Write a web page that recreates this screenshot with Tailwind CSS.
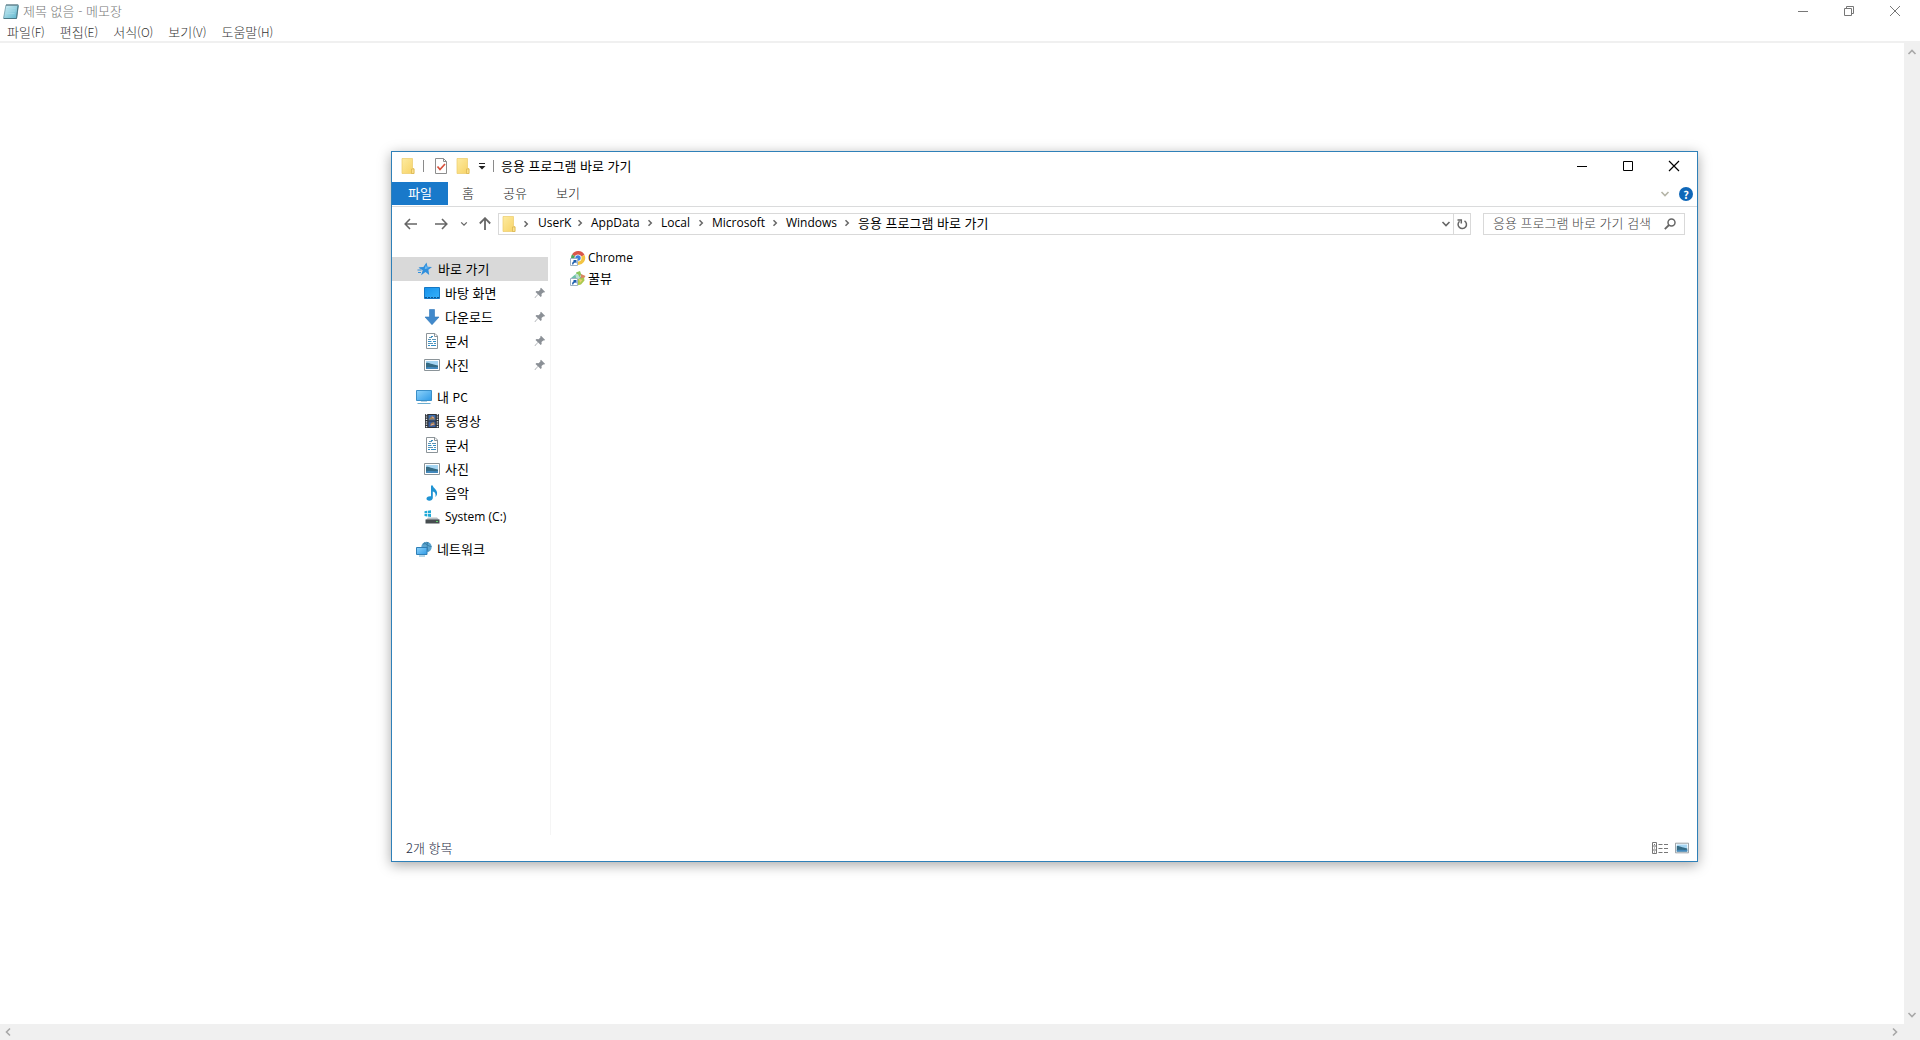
<!DOCTYPE html>
<html lang="ko">
<head>
<meta charset="utf-8">
<title>제목 없음 - 메모장</title>
<script src="https://cdn.jsdelivr.net/npm/@tailwindcss/browser@4"></script>
</head>
<body class="relative flex h-screen flex-col overflow-hidden bg-white font-['Noto_Sans_CJK_KR',sans-serif] text-[13px] leading-4 text-black">

<svg class="absolute size-0" aria-hidden="true">
  <defs>
    <linearGradient id="gFolder" x1="0" y1="0" x2="1" y2="1"><stop offset="0" stop-color="#fdeba0"/><stop offset="1" stop-color="#f7d264"/></linearGradient>
    <linearGradient id="gScreen" x1="0" y1="0" x2="1" y2="1"><stop offset="0" stop-color="#8ed3fb"/><stop offset="1" stop-color="#2f9ae6"/></linearGradient>
    <linearGradient id="gDesk" x1="0" y1="0" x2="1" y2="1"><stop offset="0" stop-color="#1691ea"/><stop offset="1" stop-color="#37b2fb"/></linearGradient>
    <linearGradient id="gNote" x1="0" y1="0" x2="1" y2="1"><stop offset="0" stop-color="#d8f1f7"/><stop offset="1" stop-color="#58b4cc"/></linearGradient>
  </defs>
  <symbol id="folder" viewBox="0 0 16 16"><path d="M2 .5h10.500v10h1.500v5H2z" fill="url(#gFolder)" stroke="#eccb6a" stroke-width=".7"/><path d="M11.500 15.500V11h2.500v4.500z" fill="#fbe08a" stroke="#d9b24c" stroke-width=".7"/></symbol>
  <symbol id="check" viewBox="0 0 16 16"><path d="M2.500.5h8l3 3v12h-11z" fill="#fff" stroke="#8d8d8d"/><path d="M10.500.5v3h3" fill="none" stroke="#8d8d8d"/><path d="M4.500 8.500l2.500 3L12 6" fill="none" stroke="#d8513c" stroke-width="1.700"/></symbol>
  <symbol id="chev" viewBox="0 0 8 8"><path d="M2.500 1.200L5.300 4 2.500 6.800" fill="none" stroke="currentColor" stroke-width="1.500"/></symbol>
  <symbol id="down" viewBox="0 0 10 10"><path d="M1.500 3L5 6.500 8.500 3" fill="none" stroke="currentColor" stroke-width="1.600"/></symbol>
  <symbol id="star" viewBox="0 0 16 16"><path d="M9.500 1.500l1 4.200 4.500.3-3.600 2.800.8 5.200-3.700-3-4.400 3.200 1.600-5L1.500 6.500l4.900-.6z" fill="#2f8fdd"/><path d="M.5 9h4M1 11.500h3M2.500 7h3" stroke="#2f8fdd" stroke-width="1"/><path d="M9 4l.7 2.500 3 .3-5 1.200z" fill="#7cc4f6"/></symbol>
  <symbol id="desktop" viewBox="0 0 16 16"><path d="M.5 2.500h15v11H.5z" fill="url(#gDesk)" stroke="#1577c4"/><path d="M1 12.500h14" stroke="#0d5590" stroke-dasharray="2 1"/></symbol>
  <symbol id="download" viewBox="0 0 16 16"><path d="M5.500.5h5v7.500h4.500L8 15.700 1 8h4.500z" fill="#4189cb" stroke="#2d76b8" stroke-width=".6"/></symbol>
  <symbol id="doc" viewBox="0 0 16 16"><path d="M2.500.5h8.500l2.500 2.500v12.500h-11z" fill="#fff" stroke="#8c9499"/><path d="M10.500.5v3h3" fill="none" stroke="#8c9499"/><path d="M7 3.500h2M4 8.500h3.500M9 8.500h3M4 12.500h2M7 12.500h5" stroke="#2f8fc9"/><path d="M4 6.500h3M8 6.500h4M4 10.500h5M10 10.500h2M5 4.500h3" stroke="#5f94b3"/></symbol>
  <symbol id="photo" viewBox="0 0 16 16"><path d="M.5 2.500h15v11H.5z" fill="#fff" stroke="#8b9499"/><path d="M2 4h12v8H2z" fill="#a5d5f2"/><path d="M2 6c2-1 4 1 12 2.500V12H2z" fill="#356b84"/><path d="M2 10.500c4-1 8 0 12-.5v2H2z" fill="#4389bd"/></symbol>
  <symbol id="pin" viewBox="0 0 12 12"><path d="M7 .8l4.200 4.200-1.200.5-.8-.1-1.700 1.700.2 2-1 1-2.500-2.500L1 11l-.4-.4 3.300-3.300L1.500 5l1-1 2.100.2 1.800-1.700-.1-.9z" fill="#8b9096"/></symbol>
  <symbol id="pc" viewBox="0 0 16 16"><path d="M.5 1.500h15v10H.5z" fill="url(#gScreen)" stroke="#3a8fc8"/><path d="M5 12h6v1H5z" fill="#b9d6e6"/><path d="M1.500 14.500h13" stroke="#6badd0"/></symbol>
  <symbol id="video" viewBox="0 0 16 16"><path d="M1 1h14v14H1z" fill="#30343a"/><path d="M2.500 1v14M13.500 1v14" stroke="#e3e6e8" stroke-width="1.400" stroke-dasharray="1.200 1.200"/><path d="M4.500 2h7v5.500h-7z" fill="#3e6eae"/><path d="M4.500 8.500h7V14h-7z" fill="#365da0"/><path d="M5 6l3-3 2 1 1 2.500H5zM6 13l1-3 3-1 1 3z" fill="#a38150"/><path d="M8 4l2 1M7 12l3-1" stroke="#d9a3a0"/></symbol>
  <symbol id="music" viewBox="0 0 16 16"><path d="M7 .5h1.800c.3 3 5.200 4 4.200 9-.4 1.200-1 2-1.600 2.500.8-3.500-.7-5-2.600-5.500V13c0 1.500-1.600 2.700-3.500 2.700S2.500 14.800 2.500 13.500 4 11 7 11.300z" fill="#1f93d3"/></symbol>
  <symbol id="drive" viewBox="0 0 16 16"><path d="M.5 2.300l2.500-.5v2.500H.5zM3.700 1.700L7 1.200v3.100H3.700zM.5 5h2.500v2.400L.5 7zM3.700 5H7v3l-3.300-.5z" fill="#1fa9d6"/><path d="M4 8.500h9l2.500 2.500H2z" fill="#b9bfc2"/><path d="M1.500 10.500h14v4h-14z" fill="#474d50"/><path d="M12 12.500h2" stroke="#5fd56c"/></symbol>
  <symbol id="network" viewBox="0 0 16 16"><circle cx="10.500" cy="6" r="5.200" fill="#5da5cf"/><path d="M7 3c2 0 3-1 5-1.500M8 1.500c2 2 5 4 7.500 4M12 1c-1 3-1 6 0 9" fill="none" stroke="#387fa8"/><path d="M.5 6.500h10.500v7H.5z" fill="url(#gScreen)" stroke="#2f7fb6"/><path d="M3 15h6" stroke="#6badd0"/></symbol>
  <symbol id="shortcut" viewBox="0 0 16 16"><path d="M.5 8.500h7v7h-7z" fill="#fff" stroke="#9fb2c4"/><path d="M2 14.500c0-2 .8-3 2-3.500L3 10h3.500v3.500l-1-1C4 12.700 3.500 13.500 3.300 14.500z" fill="#1e5fae"/></symbol>
</svg>

<!-- Notepad -->
<header class="flex h-[22px] shrink-0 items-center pb-px pl-[3px] text-[#777]">
  <svg class="size-4" viewBox="0 0 16 16"><path d="M3 2h12.500l-2 13.500H.5z" fill="url(#gNote)" stroke="#6b9aa8" stroke-width=".8"/><path d="M15 3l-1.500 12.500H1" fill="none" stroke="#4c7885"/><path d="M3.500 2h11" stroke="#55707a" stroke-width="2" stroke-dasharray="1 1"/><path d="M3.500 5.500h9M3 8h9M2.500 10.500h9" stroke="#a6dbe8" stroke-width=".7"/></svg>
  <h1 class="ml-1 font-light">제목 없음 - 메모장</h1>
  <div class="ml-auto flex pr-[2px] text-[#777]">
    <button aria-label="최소화" class="flex h-5 w-[46px] items-center justify-center"><svg class="size-3" viewBox="0 0 12 12"><path d="M1 6.500h10" stroke="currentColor"/></svg></button>
    <button aria-label="이전 크기로" class="flex h-5 w-[46px] items-center justify-center"><svg class="size-3" viewBox="0 0 12 12"><path d="M1.500 3.500h7v7h-7zM3.500 3.500v-2h7v7h-2" fill="none" stroke="currentColor"/></svg></button>
    <button aria-label="닫기" class="flex h-5 w-[46px] items-center justify-center"><svg class="size-3" viewBox="0 0 12 12"><path d="M1 1l10 10M11 1L1 11" stroke="currentColor"/></svg></button>
  </div>
</header>
<nav class="flex h-[21px] shrink-0 items-center gap-[15px] border-b-2 border-[#f0f0f0] pl-[7px] font-light text-[#333]">
  <button>파일<span class="text-xs">(F)</span></button>
  <button>편집<span class="text-xs">(E)</span></button>
  <button>서식<span class="text-xs">(O)</span></button>
  <button>보기<span class="text-xs">(V)</span></button>
  <button>도움말<span class="text-xs">(H)</span></button>
</nav>
<main class="flex min-h-0 grow text-[#a8a8a8]">
  <textarea aria-label="문서 내용" class="grow resize-none bg-white outline-none"></textarea>
  <div class="flex w-4 flex-col items-center justify-between bg-[#f0f0f0] py-1">
    <button aria-label="위로"><svg class="size-[10px] rotate-180"><use href="#down"/></svg></button>
    <button aria-label="아래로"><svg class="size-[10px]"><use href="#down"/></svg></button>
  </div>
</main>
<footer class="flex h-4 shrink-0 items-center justify-between bg-[#f0f0f0] pr-5 pb-px pl-[3px] text-[#a8a8a8]">
  <button aria-label="왼쪽으로"><svg class="size-[10px] rotate-90"><use href="#down"/></svg></button>
  <button aria-label="오른쪽으로"><svg class="size-[10px] -rotate-90"><use href="#down"/></svg></button>
</footer>

<!-- Explorer window -->
<section aria-label="응용 프로그램 바로 가기" class="absolute top-[151px] left-[391px] flex h-[711px] w-[1307px] flex-col border border-[#2f80b8] bg-white shadow-[0_3px_12px_rgba(0,0,0,0.35)]">
  <header class="flex h-[30px] shrink-0 items-center pb-[2px] pl-2">
    <svg class="size-4"><use href="#folder"/></svg>
    <i class="ml-[7px] h-3 w-px bg-[#8a8a8a]"></i>
    <button aria-label="속성" class="ml-[9px]"><svg class="size-4"><use href="#check"/></svg></button>
    <button aria-label="새 폴더" class="ml-[6px]"><svg class="size-4"><use href="#folder"/></svg></button>
    <button aria-label="빠른 실행 도구 모음 사용자 지정" class="ml-[6px]"><svg class="size-[10px]" viewBox="0 0 10 10"><path d="M2 2.500h6" stroke="#222"/><path d="M1.500 5h7L5 8.500z" fill="#222"/></svg></button>
    <i class="ml-[6px] h-3 w-px bg-[#8a8a8a]"></i>
    <h2 class="ml-[7px]">응용 프로그램 바로 가기</h2>
    <div class="ml-auto flex">
      <button aria-label="최소화" class="flex h-7 w-[46px] items-center justify-center"><svg class="size-3" viewBox="0 0 12 12"><path d="M1 6.500h10" stroke="currentColor"/></svg></button>
      <button aria-label="최대화" class="flex h-7 w-[46px] items-center justify-center"><svg class="size-3" viewBox="0 0 12 12"><path d="M1.500 1.500h9v9h-9z" fill="none" stroke="currentColor"/></svg></button>
      <button aria-label="닫기" class="flex h-7 w-[46px] items-center justify-center"><svg class="size-3" viewBox="0 0 12 12"><path d="M1 1l10 10M11 1L1 11" stroke="currentColor" stroke-width="1.200"/></svg></button>
    </div>
  </header>
  <div class="flex h-[25px] shrink-0 items-start border-b border-[#dadbdc] font-light text-[#222]">
    <button class="h-[23px] w-14 bg-[#1979ca] pb-[2px] font-normal text-white">파일</button>
    <button class="h-[23px] w-10 pb-[2px]">홈</button>
    <button class="h-[23px] w-[54px] pb-[2px]">공유</button>
    <button class="h-[23px] w-[52px] pb-[2px]">보기</button>
    <div class="ml-auto flex h-[23px] items-center gap-[9px] pr-1">
      <button aria-label="리본 확장"><svg class="size-[10px] text-[#b5b5a8]"><use href="#down"/></svg></button>
      <button aria-label="도움말" class="flex size-[14px] items-center justify-center rounded-full bg-[#0f67b8] text-[11px] leading-3 font-bold text-white">?</button>
    </div>
  </div>
  <div class="mt-[6px] flex h-[22px] shrink-0 items-center pr-3 text-[#666]">
    <div class="flex w-[106px] items-center pl-[12px]">
      <button aria-label="뒤로"><svg class="size-[14px]" viewBox="0 0 14 14"><path d="M13 7H1.500M6 2L1.200 7 6 12" fill="none" stroke="currentColor" stroke-width="1.600"/></svg></button>
      <button aria-label="앞으로" class="ml-4"><svg class="size-[14px]" viewBox="0 0 14 14"><path d="M1 7h11.500M8 2l4.800 5L8 12" fill="none" stroke="currentColor" stroke-width="1.600"/></svg></button>
      <button aria-label="최근 위치" class="ml-3"><svg class="size-2" viewBox="0 0 10 10"><use href="#down" width="10" height="10"/></svg></button>
      <button aria-label="위로" class="ml-[10px]"><svg class="size-[14px]" viewBox="0 0 14 14"><path d="M7 13V1.500M1.800 6.500L7 1.200l5.200 5.300" fill="none" stroke="currentColor" stroke-width="1.800"/></svg></button>
    </div>
    <div class="flex h-[22px] grow items-center border border-[#d9d9d9] pl-[2px]">
      <svg class="size-4"><use href="#folder"/></svg>
      <svg class="mx-[5px] size-2"><use href="#chev"/></svg>
      <div class="ml-[3px] flex items-center gap-[6px] pb-[2px] font-['Open_Sans','Noto_Sans_CJK_KR',sans-serif] text-xs leading-4 text-black">
        <a href="#" class="w-[31px]">UserK</a><svg class="mx-px size-2 text-[#666]"><use href="#chev"/></svg>
        <a href="#" class="w-[48px]">AppData</a><svg class="mx-px size-2 text-[#666]"><use href="#chev"/></svg>
        <a href="#" class="w-[29px]">Local</a><svg class="mx-px size-2 text-[#666]"><use href="#chev"/></svg>
        <a href="#" class="w-[52px]">Microsoft</a><svg class="mx-px size-2 text-[#666]"><use href="#chev"/></svg>
        <a href="#" class="w-[50px]">Windows</a><svg class="mx-px size-2 text-[#666]"><use href="#chev"/></svg>
        <a href="#" class="font-['Noto_Sans_CJK_KR',sans-serif] text-[13px] leading-4">응용 프로그램 바로 가기</a>
      </div>
      <button aria-label="이전 위치" class="mr-[2px] ml-auto"><svg class="size-[10px]"><use href="#down"/></svg></button>
      <button aria-label="새로 고침" class="flex h-5 w-[17px] items-center justify-center border-l border-[#d9d9d9]"><svg class="size-3" viewBox="0 0 12 12"><path d="M8.500 2.800A4.200 4.200 0 1 1 3.500 3.200M1.500 2h3.800v3.500" fill="none" stroke="currentColor" stroke-width="1.500"/></svg></button>
    </div>
    <div class="ml-3 flex h-[22px] w-[202px] items-center border border-[#d9d9d9] pr-2 pl-[9px]">
      <input type="search" aria-label="검색" placeholder="응용 프로그램 바로 가기 검색" class="min-w-0 grow bg-transparent pb-[2px] font-light outline-none placeholder:text-[#444]">
      <svg class="size-3" viewBox="0 0 12 12"><circle cx="7.500" cy="4.500" r="3.500" fill="none" stroke="currentColor" stroke-width="1.500"/><path d="M5 7L.8 11.200" stroke="currentColor" stroke-width="1.800"/></svg>
    </div>
  </div>
  <div class="flex min-h-0 grow pt-[3px]">
    <aside class="w-[159px] shrink-0 border-r border-[#f5f5f5] pt-[19px]">
      <a href="#" class="mr-[2px] flex h-6 items-center gap-[5px] bg-[#d9d9d9] pl-[25px]"><svg class="size-4"><use href="#star"/></svg>바로 가기</a>
      <a href="#" class="flex h-6 items-center gap-[5px] pl-8"><svg class="size-4"><use href="#desktop"/></svg>바탕 화면<svg class="mr-1 ml-auto size-3"><use href="#pin"/></svg></a>
      <a href="#" class="flex h-6 items-center gap-[5px] pl-8"><svg class="size-4"><use href="#download"/></svg>다운로드<svg class="mr-1 ml-auto size-3"><use href="#pin"/></svg></a>
      <a href="#" class="flex h-6 items-center gap-[5px] pl-8"><svg class="size-4"><use href="#doc"/></svg>문서<svg class="mr-1 ml-auto size-3"><use href="#pin"/></svg></a>
      <a href="#" class="flex h-6 items-center gap-[5px] pl-8"><svg class="size-4"><use href="#photo"/></svg>사진<svg class="mr-1 ml-auto size-3"><use href="#pin"/></svg></a>
      <a href="#" class="mt-2 flex h-6 items-center gap-[5px] pl-6"><svg class="size-4"><use href="#pc"/></svg><span>내 <span class="text-xs">PC</span></span></a>
      <a href="#" class="flex h-6 items-center gap-[5px] pl-8"><svg class="size-4"><use href="#video"/></svg>동영상</a>
      <a href="#" class="flex h-6 items-center gap-[5px] pl-8"><svg class="size-4"><use href="#doc"/></svg>문서</a>
      <a href="#" class="flex h-6 items-center gap-[5px] pl-8"><svg class="size-4"><use href="#photo"/></svg>사진</a>
      <a href="#" class="flex h-6 items-center gap-[5px] pl-8"><svg class="size-4"><use href="#music"/></svg>음악</a>
      <a href="#" class="flex h-6 items-center gap-[5px] pl-8 font-['Open_Sans',sans-serif] text-xs"><svg class="size-4"><use href="#drive"/></svg>System (C:)</a>
      <a href="#" class="mt-2 flex h-6 items-center gap-[5px] pl-6"><svg class="size-4"><use href="#network"/></svg>네트워크</a>
    </aside>
    <div class="grow pt-[9px] pl-[19px]">
      <a href="#" class="flex h-[21px] items-center gap-[2px] font-['Open_Sans',sans-serif] text-xs">
        <svg class="size-4" viewBox="0 0 16 16"><path d="M8 8L2 4.500A7 7 0 0 1 14.500 5z" fill="#d9564a"/><path d="M8 8L2 4.500A7 7 0 0 0 7.500 15z" fill="#4fa457"/><path d="M8 8l6.500-3A7 7 0 0 1 7.500 15z" fill="#f3c443"/><circle cx="8" cy="8" r="3.500" fill="#fff"/><circle cx="8" cy="8" r="2.700" fill="#3f7fdd"/><use href="#shortcut"/></svg>Chrome</a>
      <a href="#" class="flex h-[21px] items-center gap-[2px] pb-[2px]">
        <svg class="size-4" viewBox="0 0 16 16"><path d="M1 8l6-5 5 5-5 6z" fill="#6cc0a8"/><path d="M6 2.500l4-1.500 1.500 4-3 2z" fill="#8cc75c"/><path d="M5 4h3l2 4-3 2z" fill="#bce0d0"/><path d="M11 4l4.500 2-2 3h-3z" fill="#d98660"/><path d="M8 9l6-1.500.5 3-3.500 4-4 1z" fill="#a9c94e"/><path d="M9 9l3.500 1-2.500 3z" fill="#e8d271"/><use href="#shortcut"/></svg>꿀뷰</a>
    </div>
  </div>
  <footer class="flex h-[26px] shrink-0 items-center pr-2 pl-[14px] text-[#1e2c45]">
    <p class="font-light">2개 항목</p>
    <button aria-label="자세히" class="ml-auto"><svg class="h-3 w-[17px]" viewBox="0 0 17 12"><path d="M.5.5h4v11h-4zM.5 4h4M.5 8h4M2.500 2v1M2.500 5.500v1M2.500 9.500v1" fill="none" stroke="#777"/><path d="M6.500 2.500h4M12 2.500h4M6.500 6.500h4M12 6.500h4M6.500 10.500h4M12 10.500h4" stroke="#777"/></svg></button>
    <button aria-label="큰 아이콘" class="ml-[6px]"><svg class="size-[14px]" viewBox="0 1 16 14"><use href="#photo" width="16" height="16"/></svg></button>
  </footer>
</section>
</body>
</html>
